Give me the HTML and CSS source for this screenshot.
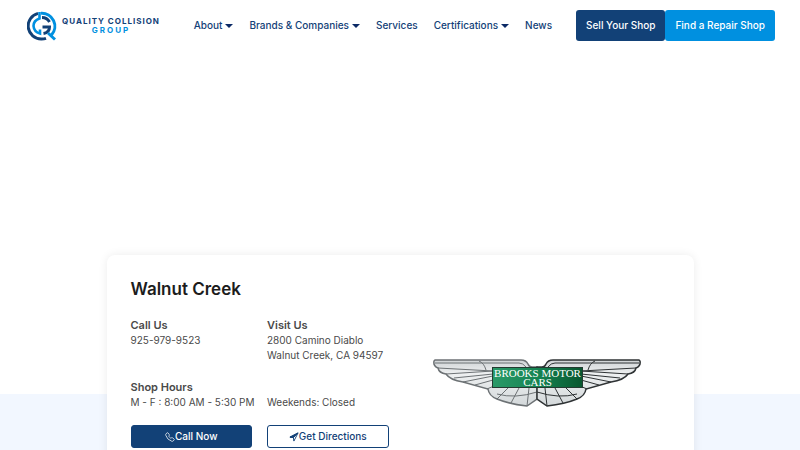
FILE: index.html
```html
<!DOCTYPE html>
<html lang="en">

<head>
  <meta charset="UTF-8">
  <meta name="viewport" content="width=device-width, initial-scale=1.0">
  <title>Walnut Creek | Quality Collision Group</title>
  <link rel="stylesheet" href="styles.css">
</head>

<body>
  <header class="site-header">
    <a href="#" class="logo">
      <svg class="logo-mark" viewBox="0 0 30 30" fill="none" aria-hidden="true">
        <g stroke="#124177" stroke-width="3">
          <path d="M11 2.400A13 13 0 0 0 14.500 28Q17 28 19 27.300" />
          <path d="M15 6.500Q20 6.500 22.500 11" />
          <path d="M15.500 16H22.500Q22.500 21.500 16.500 22.500" />
        </g>
        <g stroke="#0090e0" stroke-width="3">
          <path d="M12.500 1V7.500Q6.500 9.500 6.500 15Q7 21 13 22.500V18.500" stroke-width="2.600" />
          <path d="M14 2.300A13 13 0 0 1 24.500 24" />
          <path d="M21 22L28 28.500" />
        </g>
      </svg>
      <span class="logo-text">
        <span class="logo-name">QUALITY COLLISION</span>
        <span class="logo-group">GROUP</span>
      </span>
    </a>

    <nav class="main-nav">
      <a href="#" class="has-menu">About</a>
      <a href="#" class="has-menu">Brands &amp; Companies</a>
      <a href="#">Services</a>
      <a href="#" class="has-menu">Certifications</a>
      <a href="#">News</a>
    </nav>

    <div class="header-buttons">
      <a href="#" class="header-button navy">Sell Your Shop</a>
      <a href="#" class="header-button blue">Find a Repair Shop</a>
    </div>
  </header>

  <main>
    <div class="map-area"></div>

    <section class="location-section">
      <div class="location-card">
        <div class="location-info">
          <h1 class="location-title">Walnut Creek</h1>

          <div class="info-grid contact-row">
            <div>
              <h2 class="info-title">Call Us</h2>
              <p>925-979-9523</p>
            </div>
            <div>
              <h2 class="info-title">Visit Us</h2>
              <p>2800 Camino Diablo<br>Walnut Creek, CA 94597</p>
            </div>
          </div>

          <h2 class="info-title">Shop Hours</h2>
          <div class="info-grid hours-row">
            <p>M - F : 8:00 AM - 5:30 PM</p>
            <p>Weekends: Closed</p>
          </div>

          <div class="info-grid">
            <a href="#" class="action-button filled">
              <svg class="icon" viewBox="0 0 16 16" fill="none" stroke="currentColor" stroke-width="1.200" stroke-linejoin="round" aria-hidden="true">
                <path d="M3.600 1.300L1.700 2.800Q.8 3.700 1.200 5.200Q3.500 12.500 10.800 14.800Q12.300 15.200 13.200 14.300L14.700 12.400Q15.200 11.700 14.400 11.100L12 9.300Q11.400 8.900 10.700 9.200L8.900 9.700Q7.200 8.800 6.300 7.100L6.800 5.300Q7.100 4.600 6.700 4L4.900 1.600Q4.300.8 3.600 1.300Z" />
              </svg>
              Call Now
            </a>
            <a href="#" class="action-button outlined">
              <svg class="icon" viewBox="0 0 16 16" fill="none" stroke="currentColor" stroke-width="1.500" stroke-linejoin="round" aria-hidden="true">
                <path d="M14.500 1.500L1.500 8.200L7 9L7.800 14.500Z" />
                <path d="M14.500 1.500L1.500 8.200L7 9Z" fill="currentColor" />
              </svg>
              Get Directions
            </a>
          </div>
        </div>

        <div class="brand">
          <svg class="brand-logo" viewBox="0 0 208 50" role="img" aria-label="Brooks Motor Cars">
            <defs>
              <linearGradient id="banner" x1="0" x2="1" y1="0" y2="0">
                <stop offset="0" stop-color="#2a9a68" />
                <stop offset=".5" stop-color="#168453" />
                <stop offset="1" stop-color="#08572f" />
              </linearGradient>
              <linearGradient id="silver" x1="0" x2="0" y1="0" y2="1">
                <stop offset="0" stop-color="#cfd3d5" />
                <stop offset=".3" stop-color="#eef0f1" />
                <stop offset="1" stop-color="#d3d8da" />
              </linearGradient>
              <path id="wing-shape" d="M2 2H88Q93 2 95 6Q96 9 99 9H104V41L94 48Q76 46 64 41Q56 38 55 31L30 24Q17 22 13 16Q6 15 5 10Q0 8 1 3Z" />
              <path id="feathers" d="M2 5H86Q90 5 93 9M5 10L60 13M13 16L60 13M21 20L60 16M30 24L60 18M42 27L60 22M54 31L61 28M46 3Q51 5 53 12M64 41L75 30M78 45L86 30M94 48L96 30M64 36Q82 41 104 34" />
            </defs>
            <g fill="none" stroke="#6d7275">
              <use href="#wing-shape" fill="url(#silver)" stroke-width="1.500" />
              <use href="#feathers" />
            </g>
            <g fill="none" stroke="#2f3335" transform="translate(208 0) scale(-1 1)">
              <use href="#wing-shape" fill="url(#silver)" stroke-width="1.500" />
              <use href="#feathers" />
            </g>
            <rect x="59.500" y="9.500" width="90" height="20" fill="url(#banner)" stroke="#243a31" />
            <g class="brand-name">
              <text x="104.500" y="19">BROOKS MOTOR</text>
              <text x="104.500" y="28">CARS</text>
            </g>
          </svg>
        </div>
      </div>
    </section>
  </main>
</body>

</html>
```
FILE: styles.css
```css
* {
  margin: 0;
  padding: 0;
  box-sizing: border-box;
}

body {
  font-family: Inter, "Liberation Sans", sans-serif;
  font-size: 10px;
  line-height: 15px;
  color: #4a4a4a;
  background-color: #fff;
  overflow-x: hidden;
}

a {
  color: #124177;
  text-decoration: none;
}

.site-header {
  display: flex;
  align-items: center;
  padding: 10px 25px 10px 27px;
}

.logo {
  display: flex;
  align-items: center;
  gap: 5px;
}

.logo-mark {
  width: 30px;
  height: 30px;
}

.logo-text {
  display: flex;
  flex-direction: column;
  font-size: 8px;
  font-weight: 700;
  line-height: 9px;
  white-space: nowrap;
}

.logo-name {
  letter-spacing: 1px;
}

.logo-group {
  align-self: center;
  color: #0090e0;
  letter-spacing: 2px;
}

.main-nav {
  display: flex;
  gap: 16px;
  margin-left: auto;
  margin-right: 24px;
  font-weight: 500;
  white-space: nowrap;
}

.has-menu::after {
  content: "";
  display: inline-block;
  margin-left: 3px;
  border: 4px solid transparent;
  border-top-color: #0b2a66;
  border-bottom: 0;
  vertical-align: 1px;
}

.header-buttons {
  display: flex;
}

.header-button {
  padding: 8px 10px;
  border-radius: 3px;
  color: #fff;
  font-weight: 500;
  white-space: nowrap;
}

.navy {
  background-color: #124177;
}

.blue {
  background-color: #0090e0;
}

.map-area {
  height: 343px;
}

.location-section {
  padding: 0 24px 48px;
  background-color: #f2f7ff;
}

.location-card {
  position: relative;
  top: -139px;
  display: grid;
  grid-template-columns: 258px 1fr;
  gap: 16px;
  max-width: 587px;
  margin: 0 auto;
  padding: 24px 24px 62px;
  border-radius: 8px;
  background-color: #fff;
  box-shadow: 0 0 10px rgba(0, 0, 0, 0.08);
}

.location-title {
  margin-bottom: 18px;
  color: #1c1c1c;
  font-size: 17px;
  font-weight: 600;
  line-height: 20px;
}

.info-title {
  font-size: 11px;
  font-weight: 600;
  line-height: 16px;
}

.info-grid {
  display: grid;
  grid-template-columns: repeat(2, minmax(0, 1fr));
  gap: 15px;
  white-space: nowrap;
}

.contact-row {
  margin-bottom: 16px;
}

.hours-row {
  margin-bottom: 15px;
}

.action-button {
  display: flex;
  align-items: center;
  justify-content: center;
  padding: 3px 8px;
  border: 1px solid #124177;
  border-radius: 3px;
  font-weight: 500;
}

.filled {
  background-color: #124177;
  color: #fff;
}

.outlined {
  background-color: #fff;
}

.icon {
  width: 10px;
  height: 10px;
}

.brand {
  display: flex;
  align-items: center;
  justify-content: center;
  /* centres the logo on the full card, not on the padded area */
  margin-bottom: -38px;
}

.brand-logo {
  width: 208px;
  height: 50px;
}

.brand-name {
  fill: #fff;
  font-family: "Liberation Serif", serif;
  font-size: 11px;
  text-anchor: middle;
}
```
